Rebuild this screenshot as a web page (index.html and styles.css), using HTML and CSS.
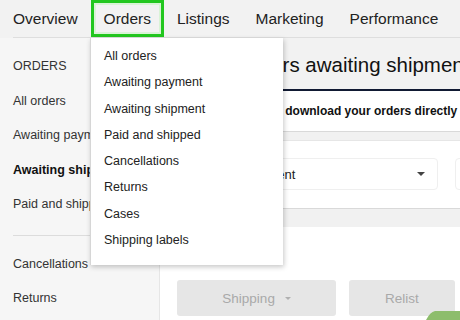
FILE: index.html
```html
<!DOCTYPE html>
<html>
    <head>
        <title>Seller Hub - Orders</title>
        <meta charset="UTF-8">
        <meta name="viewport" content="width=device-width, initial-scale=1.0">
        <link rel="stylesheet" href="styles.css">
    </head>

    <body>
        <header class="topnav">
            <nav class="tabs">
                <a class="tab">Overview</a>
                <a class="tab active">Orders</a>
                <a class="tab">Listings</a>
                <a class="tab">Marketing</a>
                <a class="tab">Performance</a>
            </nav>

            <!-- Orders menu, open -->
            <ul class="dropdown">
                <li>All orders</li>
                <li>Awaiting payment</li>
                <li>Awaiting shipment</li>
                <li>Paid and shipped</li>
                <li>Cancellations</li>
                <li>Returns</li>
                <li>Cases</li>
                <li>Shipping labels</li>
            </ul>
        </header>

        <div class="page">
            <aside class="sidebar">
                <div class="side-title">ORDERS</div>
                <a class="side-link">All orders</a>
                <a class="side-link">Awaiting payment</a>
                <a class="side-link current">Awaiting shipment</a>
                <a class="side-link">Paid and shipped</a>
                <hr class="side-rule">
                <a class="side-link">Cancellations</a>
                <a class="side-link">Returns</a>
            </aside>

            <main class="content">
                <div class="title-bar">
                    <h1>Active orders awaiting shipment</h1>
                </div>

                <div class="notice">New! You can now download your orders directly to a spreadsheet.</div>

                <div class="band"></div>

                <div class="filters">
                    <div class="select">
                        <span>Awaiting shipment</span>
                        <span class="caret"></span>
                    </div>
                    <div class="select narrow"></div>
                </div>

                <div class="band tall"></div>

                <div class="actions">
                    <button class="btn wide" disabled>Shipping <span class="caret small"></span></button>
                    <button class="btn" disabled>Relist</button>
                </div>
            </main>
        </div>

        <svg class="corner" width="34" height="9" viewBox="0 0 34 9">
            <path d="M9 0 H34 V9 H0 Q4 1 9 0 Z" fill="#8dbd6c"></path>
        </svg>
    </body>
</html>
```

FILE: styles.css
```css
body {
    margin: 0;
    width: 460px;
    height: 320px;
    overflow: hidden;
    position: relative;
    font-family: "Liberation Sans", Arial, sans-serif;
    color: #222;
    background-color: #f5f5f5;
}

/* top navigation */
.topnav {
    position: relative;
    background-color: #f2f2f2;
    padding-left: 13px;
}
.tabs {
    display: flex;
    height: 38px;
    border-bottom: 1px solid #dedede;
    box-sizing: border-box;
}
.tab {
    padding: 0 13px;
    line-height: 38px;
    font-size: 15.5px;
    color: #222;
    white-space: nowrap;
}
.tab:first-child {
    padding-left: 0;
}
.tab.active {
    box-shadow: inset 0 0 0 3px #22c71f, inset 0 0 0 5px #d9f3d6;
}

.dropdown {
    position: absolute;
    top: 38px;
    left: 90px;
    width: 193px;
    margin: 0;
    padding: 5px 0 12px;
    list-style: none;
    background-color: #fff;
    border-left: 1px solid #d6d6d6;
    box-shadow: 1px 2px 5px rgba(0, 0, 0, 0.22);
    box-sizing: border-box;
    z-index: 2;
}
.dropdown li {
    padding-left: 13px;
    line-height: 26.3px;
    font-size: 12.5px;
    color: #222;
}

/* page body */
.page {
    display: flex;
    height: 282px;
}

.sidebar {
    width: 160px;
    flex-shrink: 0;
    padding: 11px 0 0 13px;
    box-sizing: border-box;
    background-color: #f6f6f6;
    border-right: 1px solid #e6e6e6;
    font-size: 12.5px;
    color: #333;
    white-space: nowrap;
    overflow: hidden;
}
.side-title,
.side-link {
    display: block;
    line-height: 34.5px;
}
.side-link.current {
    font-weight: bold;
    color: #111;
}
.side-rule {
    margin: 13px 0 11px;
    border: none;
    border-top: 1px solid #dcdcdc;
}

.content {
    flex: 1;
    min-width: 0;
    overflow: hidden;
    background-color: #fff;
}
.title-bar {
    padding: 16px 17px 13px 20px;
    background-color: #f2f2f2;
    border-bottom: 2px solid #111a33;
}
.title-bar h1 {
    margin: 0;
    font-size: 20.5px;
    font-weight: normal;
    line-height: 22px;
    color: #111;
    white-space: nowrap;
}
.notice {
    padding: 0 17px;
    line-height: 40px;
    font-size: 12px;
    font-weight: bold;
    color: #111;
    white-space: nowrap;
}
.band {
    height: 8px;
    background-color: #f1f1f1;
    border-top: 1px solid #d9d9d9;
    border-bottom: 1px solid #e6e6e6;
}
.band.tall {
    height: 18px;
    border-bottom: none;
}

.filters {
    display: flex;
    gap: 17px;
    padding: 17px 17px 18px;
}
.select {
    display: flex;
    align-items: center;
    justify-content: space-between;
    flex-shrink: 0;
    width: 261px;
    height: 32px;
    padding: 0 12px 0 12px;
    box-sizing: border-box;
    border: 1px solid #efefef;
    border-radius: 4px;
    font-size: 13px;
    color: #222;
}
.select.narrow {
    width: 120px;
}
.caret {
    width: 0;
    height: 0;
    border-left: 4px solid transparent;
    border-right: 4px solid transparent;
    border-top: 4px solid #444;
}
.caret.small {
    display: inline-block;
    margin-left: 6px;
    vertical-align: middle;
    border-left-width: 3px;
    border-right-width: 3px;
    border-top: 3px solid #b0b0b0;
}

.actions {
    display: flex;
    gap: 13px;
    padding: 53px 17px 0;
}
.btn {
    flex-shrink: 0;
    width: 106px;
    height: 36px;
    border: none;
    border-radius: 3px;
    background-color: #e6e6e6;
    color: #a9a9a9;
    font-family: "Liberation Sans", Arial, sans-serif;
    font-size: 13.5px;
}
.btn.wide {
    width: 159px;
}

.corner {
    position: absolute;
    right: 0;
    bottom: 0;
}
```
